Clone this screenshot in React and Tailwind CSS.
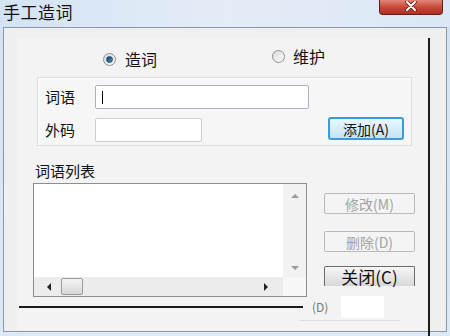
import React from "react";

const font = { fontFamily: '"Noto Sans CJK SC", "Noto Sans", sans-serif' };

const Radio = ({ checked }) => (
  <span className="w-[13px] h-[13px] rounded-full border border-[#8e8f8f] bg-gradient-to-br from-[#dcdcdc] to-[#fafafa] flex items-center justify-center shrink-0">
    {checked && (
      <span className="w-[7px] h-[7px] rounded-full bg-gradient-to-br from-[#0f3b5e] to-[#4a9fd6] border border-[#1d4a6e]" />
    )}
  </span>
);

const SideButton = ({ label, disabled }) => (
  <button
    className={
      disabled
        ? "w-[91px] h-[21px] rounded-[2px] border border-[#b9b9b9] bg-[#f4f4f4] text-[#a3a3a3] text-[14px] leading-none flex items-center justify-center"
        : "w-[91px] h-[20px] rounded-t-[2px] border border-b-0 border-[#6b6b6b] bg-gradient-to-b from-[#f6f6f6] to-[#d8d8d8] text-[#111] text-[17px] leading-none flex items-center justify-center"
    }
  >
    {label}
  </button>
);

const App = () => {
  return (
    <div
      className="w-[450px] h-[336px] overflow-hidden bg-gradient-to-b from-[#d3e2f2] to-[#dde9f5] flex flex-col"
      style={font}
    >
      {/* title bar */}
      <div className="h-[27px] flex items-start justify-between pl-[3px] pr-[7px] bg-gradient-to-r from-[#d4e3f2] via-[#e3edf8] to-[#dbe7f4]">
        <span className="mt-[1px] text-[17px] leading-[21px] text-[#111] tracking-[0.5px]">手工造词</span>
        <div className="w-[64px] h-[15px] rounded-b-[4px] border border-t-0 border-[#5a2019] bg-gradient-to-b from-[#e2867a] via-[#c8493a] to-[#b0301f] flex items-center justify-center">
          <svg width="12" height="10" viewBox="0 0 12 10" className="-mt-[2px]">
            <path d="M2 1 L10 9 M10 1 L2 9" stroke="#4a1a14" strokeWidth="3.4" strokeLinecap="round" />
            <path d="M2 1 L10 9 M10 1 L2 9" stroke="#ffffff" strokeWidth="2" strokeLinecap="round" />
          </svg>
        </div>
      </div>

      {/* window body */}
      <div className="ml-[3px] w-[444px] h-[305px] border border-[#8898ad] bg-[#efefef]">
        <div className="ml-[13px] mt-[10px] w-[413px] h-[298px] border-r-2 border-[#1c1c1c]">
          <div className="h-[292px] bg-[#f3f3f3]">
            {/* radio row */}
            <div className="flex items-start pt-[9px] pl-[86px] h-[30px]">
              <div className="flex items-center gap-[9px] mt-[3px]">
                <Radio checked />
                <span className="text-[16px] leading-[18px] text-[#111]">造词</span>
              </div>
              <div className="flex items-center gap-[8px] ml-[115px]">
                <Radio />
                <span className="text-[16px] leading-[18px] text-[#111]">维护</span>
              </div>
            </div>

            {/* group box */}
            <div className="ml-[20px] mt-[9px] w-[375px] h-[69px] border border-[#d9dde2] bg-[#f6f6f6] shadow-[inset_1px_1px_0_#ffffff] pl-[7px] pt-[7px]">
              <div className="flex items-center">
                <span className="w-[50px] text-[15px] leading-[20px] text-[#111]">词语</span>
                <div className="w-[214px] h-[24px] border border-[#a9b2bc] rounded-[2px] bg-white flex items-center pl-[6px]">
                  <span className="w-[1px] h-[13px] bg-black" />
                </div>
              </div>
              <div className="flex items-center mt-[9px]">
                <span className="w-[50px] text-[15px] leading-[20px] text-[#111]">外码</span>
                <div className="w-[107px] h-[24px] border border-[#c9ced4] rounded-[2px] bg-white" />
                <button className="ml-[126px] -mt-[3px] w-[76px] h-[23px] rounded-[3px] border-2 border-[#3c9bd3] bg-gradient-to-b from-[#ebf7fd] to-[#c3e3f5] text-[14px] leading-none text-[#111] flex items-center justify-center">
                  添加(A)
                </button>
              </div>
            </div>

            {/* list label */}
            <div className="ml-[18px] mt-[15px] text-[15px] leading-[20px] text-[#111]">词语列表</div>

            {/* list + buttons */}
            <div className="flex items-start mt-[2px]">
              <div className="ml-[16px] w-[274px] h-[114px] border border-[#8a8d92] bg-white flex flex-col">
                <div className="flex flex-1">
                  <div className="flex-1" />
                  <div className="w-[23px] bg-[#f2f2f2] flex flex-col items-center justify-between pt-[9px] pb-[6px]">
                    <svg width="10" height="6" viewBox="0 0 10 6">
                      <polygon points="5,1 9,5 1,5" fill="#9a9a9a" />
                    </svg>
                    <svg width="10" height="6" viewBox="0 0 10 6">
                      <polygon points="1,1 9,1 5,5" fill="#9a9a9a" />
                    </svg>
                  </div>
                </div>
                <div className="flex h-[19px]">
                  <div className="flex-1 bg-[#ececec] flex items-center pl-[12px] pr-[14px]">
                    <svg width="6" height="8" viewBox="0 0 6 8">
                      <polygon points="5,0 5,8 1,4" fill="#222" />
                    </svg>
                    <div className="ml-[9px] w-[22px] h-[17px] rounded-[2px] border border-[#9c9c9c] bg-gradient-to-b from-[#f4f4f4] to-[#d6d6d6]" />
                    <div className="flex-1" />
                    <svg width="6" height="8" viewBox="0 0 6 8">
                      <polygon points="1,0 5,4 1,8" fill="#222" />
                    </svg>
                  </div>
                  <div className="w-[23px] bg-[#f7f7f7]" />
                </div>
              </div>

              <div className="ml-[17px] mt-[10px] flex flex-col gap-[17px]">
                <SideButton label="修改(M)" disabled />
                <div className="flex flex-col gap-[14px]">
                  <SideButton label="删除(D)" disabled />
                  <SideButton label="关闭(C)" />
                </div>
              </div>
            </div>

            {/* bottom row */}
            <div className="flex items-center h-[20px] ml-[2px]">
              <div className="w-[284px] h-[2px] bg-[#1a1a1a]" />
              <span className="ml-[9px] text-[12px] leading-none text-[#777]">(D)</span>
              <div className="ml-[13px] w-[43px] h-[22px] bg-white" />
            </div>
            <div className="ml-[283px] mt-[3px] w-[100px] h-[1px] bg-[#dcdcdc]" />
          </div>
        </div>
      </div>
    </div>
  );
};

export default App;
